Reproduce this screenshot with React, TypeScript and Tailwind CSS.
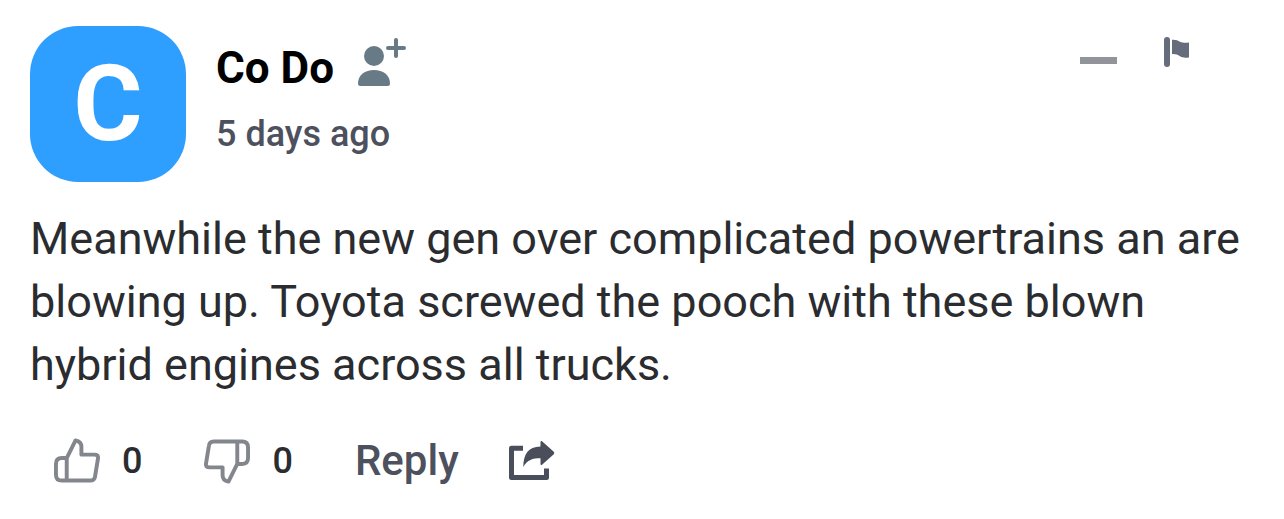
const AddFriendIcon = () => (
    <svg className="h-12 w-12" viewBox="0 0 48 48" fill="#687a86" aria-hidden="true">
        <circle cx="16" cy="18" r="10" />
        <path d="M0 45.500C0 37 7 32 16 32s16 5 16 13.500q0 2.500-2.500 2.500h-27Q0 48 0 45.500z" />
        <path d="M38 2v16M30 10h16" stroke="#687a86" strokeWidth="4" strokeLinecap="round" />
    </svg>
)

const FlagIcon = () => (
    <svg className="h-[31px] w-[26px]" viewBox="0 0 26 31" fill="#656c7b" aria-hidden="true">
        <rect width="6" height="30" rx="3" />
        <path d="M8 2.800c4.500 0 5.500.700 8.500 2.200 2.300 1 4.500.700 8.500.500v15c-4 .500-6.500.300-9-1.200-2.500-1.600-4-2.500-8-2.300z" />
    </svg>
)

const ThumbIcon = ({ down = false }: { down?: boolean }) => (
    <svg
        className={down ? "h-[46px] w-[46px] rotate-180" : "h-[46px] w-[46px]"}
        viewBox="0 0 47 46"
        fill="none"
        stroke="#84868d"
        strokeWidth="4"
        strokeLinejoin="round"
        aria-hidden="true"
    >
        <path d="M13 20H8q-6 0-6 6v11q0 6 6 6h29q4.500 0 5-4.500L45 20q.300-3.500-3.500-3.500H28V8.500Q28 3 22 2L13 20v23" />
    </svg>
)

const ShareIcon = () => (
    <svg className="h-10 w-[46px]" viewBox="0 0 46 40" fill="#4a4d5a" aria-hidden="true">
        <path d="M14 7.300H2.500v29.200H37.500V27.500" fill="none" stroke="#4a4d5a" strokeWidth="5" strokeLinejoin="round" />
        <path d="M33 .300 44.500 10.500q1.500 1.500 0 3L33 23.700q-1.500 1-1.500-1v-5.400c-8 0-13 1.500-17.200 8.700C14.500 13 19 6 31.500 5.500V1.300q0-2 1.500-1z" />
    </svg>
)

export default function App() {
    return (
        <article className="bg-white px-[30px] pt-[26px] pb-8 font-['Roboto',sans-serif]">
            <header className="flex items-start">
                <div className="flex size-[156px] shrink-0 items-center justify-center rounded-[48px] bg-[#2e9eff] text-[106px] leading-none font-bold text-white">
                    C
                </div>
                <div className="ml-[30px] grow pt-3">
                    <div className="flex items-start gap-6">
                        <h2 className="pt-1 text-[44px] leading-[52px] font-bold text-black">Co Do</h2>
                        <button type="button" aria-label="Add friend">
                            <AddFriendIcon />
                        </button>
                    </div>
                    <time className="mt-5 block text-[36px] leading-10 font-medium text-[#4d505d]">5 days ago</time>
                </div>
                <div className="mr-16 flex items-center gap-[47px] pt-[11px]">
                    <button type="button" aria-label="Collapse" className="pt-4">
                        <span className="block h-[7px] w-[37px] bg-[#91949b]" />
                    </button>
                    <button type="button" aria-label="Flag">
                        <FlagIcon />
                    </button>
                </div>
            </header>

            <p className="mt-[25px] text-[45px] leading-[63px] text-[#2a2c30]">
                Meanwhile the new gen over complicated powertrains an are blowing up. Toyota screwed the pooch with these blown hybrid engines across all trucks.
            </p>

            <footer className="mt-[39px] flex items-center pl-6 font-medium">
                <button type="button" className="flex items-center gap-[22px] text-[36px] leading-[52px] text-[#2a2c30]">
                    <ThumbIcon />0
                </button>
                <button type="button" className="ml-[62px] flex items-center gap-[22px] text-[36px] leading-[52px] text-[#2a2c30]">
                    <ThumbIcon down />0
                </button>
                <button type="button" className="ml-[62px] text-[42px] leading-[52px] text-[#4d505d]">Reply</button>
                <button type="button" aria-label="Share" className="ml-[50px]">
                    <ShareIcon />
                </button>
            </footer>
        </article>
    )
}
